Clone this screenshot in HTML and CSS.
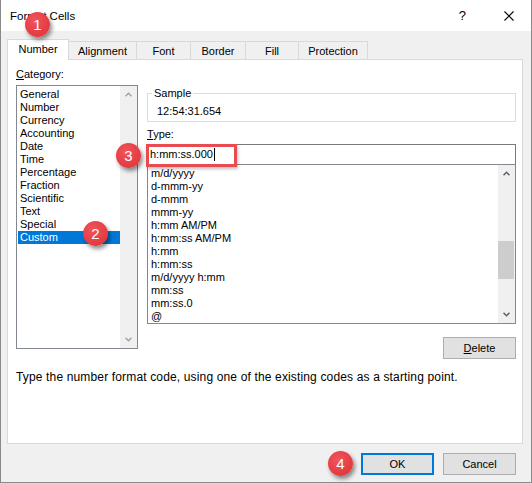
FILE: index.html
```html
<!DOCTYPE html>
<html>
<head>
<meta charset="utf-8">
<link rel="stylesheet" href="styles.css">
</head>
<body>
<div class="dialog">
  <div class="titlebar">
    <span class="title">Format Cells</span>
    <span class="help">?</span>
    <svg class="close" width="10" height="10" viewBox="0 0 10 10"><path d="M0.5 0.5L9.5 9.5M9.5 0.5L0.5 9.5" stroke="#000" stroke-width="1.1" fill="none"/></svg>
  </div>
  <div class="tabs">
    <div class="tab sel t-number">Number</div>
    <div class="tab t-align">Alignment</div>
    <div class="tab t-font">Font</div>
    <div class="tab t-border">Border</div>
    <div class="tab t-fill">Fill</div>
    <div class="tab t-prot">Protection</div>
  </div>
  <div class="panel">
    <div class="cols">
      <div class="leftcol">
        <div class="label"><u>C</u>ategory:</div>
        <div class="catlist">
          <div class="items">
            <div class="item">General</div>
            <div class="item">Number</div>
            <div class="item">Currency</div>
            <div class="item">Accounting</div>
            <div class="item">Date</div>
            <div class="item">Time</div>
            <div class="item">Percentage</div>
            <div class="item">Fraction</div>
            <div class="item">Scientific</div>
            <div class="item">Text</div>
            <div class="item">Special</div>
            <div class="item selected">Custom</div>
          </div>
          <div class="scrollbar">
            <svg class="arrow" width="7" height="5" viewBox="0 0 7 5"><path d="M0.5 4.2L3.5 1.2L6.5 4.2" stroke="#a3a3a3" stroke-width="1.5" fill="none"/></svg>
            <div class="track"></div>
            <svg class="arrow" width="7" height="5" viewBox="0 0 7 5"><path d="M0.5 0.8L3.5 3.8L6.5 0.8" stroke="#a3a3a3" stroke-width="1.5" fill="none"/></svg>
          </div>
        </div>
      </div>
      <div class="rightcol">
        <div class="group">
          <span class="legend">Sample</span>
          <div class="sample">12:54:31.654</div>
        </div>
        <div class="label type-label"><u>T</u>ype:</div>
        <div class="input">h:mm:ss.000<span class="caret"></span></div>
        <div class="typelist">
          <div class="items mono">
            <div class="item">m/d/yyyy</div>
            <div class="item">d-mmm-yy</div>
            <div class="item">d-mmm</div>
            <div class="item">mmm-yy</div>
            <div class="item">h:mm AM/PM</div>
            <div class="item">h:mm:ss AM/PM</div>
            <div class="item">h:mm</div>
            <div class="item">h:mm:ss</div>
            <div class="item">m/d/yyyy h:mm</div>
            <div class="item">mm:ss</div>
            <div class="item">mm:ss.0</div>
            <div class="item">@</div>
          </div>
          <div class="scrollbar">
            <svg class="arrow" width="7" height="5" viewBox="0 0 7 5"><path d="M0.5 4.2L3.5 1.2L6.5 4.2" stroke="#606060" stroke-width="1.5" fill="none"/></svg>
            <div class="track"><div class="thumb"></div></div>
            <svg class="arrow" width="7" height="5" viewBox="0 0 7 5"><path d="M0.5 0.8L3.5 3.8L6.5 0.8" stroke="#606060" stroke-width="1.5" fill="none"/></svg>
          </div>
        </div>
        <div class="btnrow">
          <div class="btn"><u>D</u>elete</div>
        </div>
      </div>
    </div>
    <div class="desc">Type the number format code, using one of the existing codes as a starting point.</div>
  </div>
  <div class="footer">
    <div class="btn default">OK</div>
    <div class="btn">Cancel</div>
  </div>

  <div class="highlight"></div>
  <div class="badge b1">1</div>
  <div class="badge b2">2</div>
  <div class="badge b3">3</div>
  <div class="badge b4">4</div>
</div>
</body>
</html>
```

FILE: styles.css
```css
html, body {
  margin: 0;
  padding: 0;
  background: #dadada;
}
body {
  font-family: "Liberation Sans", Arial, sans-serif;
  font-size: 11px;
  color: #000;
}
.dialog {
  position: relative;
  width: 532px;
  height: 483px;
  box-sizing: border-box;
  border-left: 1px solid #8a8a8a;
  border-right: 1px solid #8a8a8a;
  border-bottom: 1px solid #8a8a8a;
  background: #f0f0f0;
  display: flex;
  flex-direction: column;
}
.titlebar {
  height: 31px;
  background: #fff;
  display: flex;
  align-items: center;
  padding-left: 9px;
  flex: none;
}
.title {
  font-size: 11.5px;
  flex: 1;
}
.help {
  font-size: 13px;
  margin-right: 38px;
}
.close {
  margin-right: 17px;
}
.tabs {
  margin-top: 8px;
  height: 20px;
  display: flex;
  align-items: flex-end;
  padding-left: 6px;
  flex: none;
  position: relative;
  z-index: 2;
}
.tab {
  height: 18px;
  box-sizing: border-box;
  border: 1px solid #d9d9d9;
  border-bottom: none;
  margin-left: -1px;
  display: flex;
  align-items: center;
  justify-content: center;
  line-height: 13px;
  padding-top: 1px;
  background: #f0f0f0;
}
.tab.sel {
  height: 21px;
  margin-bottom: -1px;
  margin-left: 0;
  background: #fff;
  padding-top: 0;
  padding-bottom: 1px;
  position: relative;
  z-index: 3;
}
.t-number { width: 62px; }
.t-align { width: 69px; }
.t-font { width: 55px; }
.t-border { width: 56px; }
.t-fill { width: 54px; }
.t-prot { width: 70px; }

.panel {
  margin-left: 6px;
  width: 516px;
  height: 385px;
  box-sizing: border-box;
  border: 1px solid #d9d9d9;
  background: #fff;
  padding: 8px 6px 0 8px;
  flex: none;
  position: relative;
  z-index: 1;
}
.cols {
  display: flex;
  gap: 9px;
}
.leftcol {
  width: 122px;
  flex: none;
}
.rightcol {
  width: 369px;
  flex: none;
  display: flex;
  flex-direction: column;
}
.label {
  line-height: 13px;
}
.leftcol .label {
  margin-bottom: 4px;
}
.catlist {
  height: 264px;
  box-sizing: border-box;
  border: 1px solid #828790;
  display: flex;
}
.items {
  flex: 1;
  padding-top: 2px;
}
.catlist .item {
  line-height: 13px;
  height: 13px;
  margin-left: 1px;
  padding-left: 2px;
}
.item.selected {
  background: #0078d7;
  color: #fff;
}
.scrollbar {
  width: 17px;
  background: #f0f0f0;
  display: flex;
  flex-direction: column;
  align-items: center;
  flex: none;
}
.scrollbar .arrow {
  flex: none;
  margin: 6px 0;
}
.track {
  flex: 1;
  width: 100%;
  position: relative;
}
.thumb {
  position: absolute;
  left: 0;
  right: 1px;
  top: 59px;
  height: 38px;
  background: #cdcdcd;
}
.group {
  position: relative;
  margin-top: 25px;
  border: 1px solid #dcdcdc;
  height: 29px;
  box-sizing: border-box;
  padding: 11px 0 0 9px;
}
.legend {
  position: absolute;
  left: 4px;
  top: -7px;
  background: #fff;
  padding: 0 2px;
  line-height: 13px;
}
.sample {
  line-height: 13px;
}
.type-label {
  margin-top: 6px;
}
.input {
  margin-top: 3px;
  height: 20px;
  box-sizing: border-box;
  border: 1px solid #7a7a7a;
  border-bottom: none;
  padding-left: 2px;
  line-height: 19px;
  display: flex;
  align-items: center;
}
.caret {
  display: inline-block;
  width: 1px;
  height: 13px;
  background: #000;
  margin-left: 1px;
}
.typelist {
  height: 160px;
  box-sizing: border-box;
  border: 1px solid #828790;
  display: flex;
}
.typelist .item {
  line-height: 13px;
  height: 13px;
  padding-left: 3px;
}
.typelist .items {
  padding-top: 2px;
}
.btnrow {
  display: flex;
  justify-content: flex-end;
  margin-top: 13px;
}
.btn {
  width: 73px;
  height: 22px;
  box-sizing: border-box;
  border: 1px solid #adadad;
  background: #e1e1e1;
  display: flex;
  align-items: center;
  justify-content: center;
  line-height: 13px;
}
.btn.default {
  border: 2px solid #0078d7;
}
.desc {
  margin-top: 12px;
  line-height: 13px;
  font-size: 12px;
  letter-spacing: 0.15px;
}
.footer {
  display: flex;
  justify-content: flex-end;
  gap: 9px;
  margin-top: 9px;
  padding-right: 15px;
}
.highlight {
  position: absolute;
  left: 145px;
  top: 144px;
  width: 91px;
  height: 23px;
  box-sizing: border-box;
  border: 3px solid #e84c51;
  box-shadow: 1px 2px 3px rgba(0,0,0,0.25);
  z-index: 5;
}
.badge {
  position: absolute;
  width: 25px;
  height: 25px;
  border-radius: 50%;
  background: radial-gradient(circle at 40% 35%, #f0545a, #dc2f35);
  color: #fff;
  font-size: 15px;
  line-height: 25px;
  text-align: center;
  box-shadow: 2px 3px 4px rgba(0,0,0,0.45);
  z-index: 6;
}
.b1 { left: 24px; top: 12px; }
.b2 { left: 82px; top: 221px; }
.b3 { left: 115px; top: 143px; }
.b4 { left: 327px; top: 451px; }
```
